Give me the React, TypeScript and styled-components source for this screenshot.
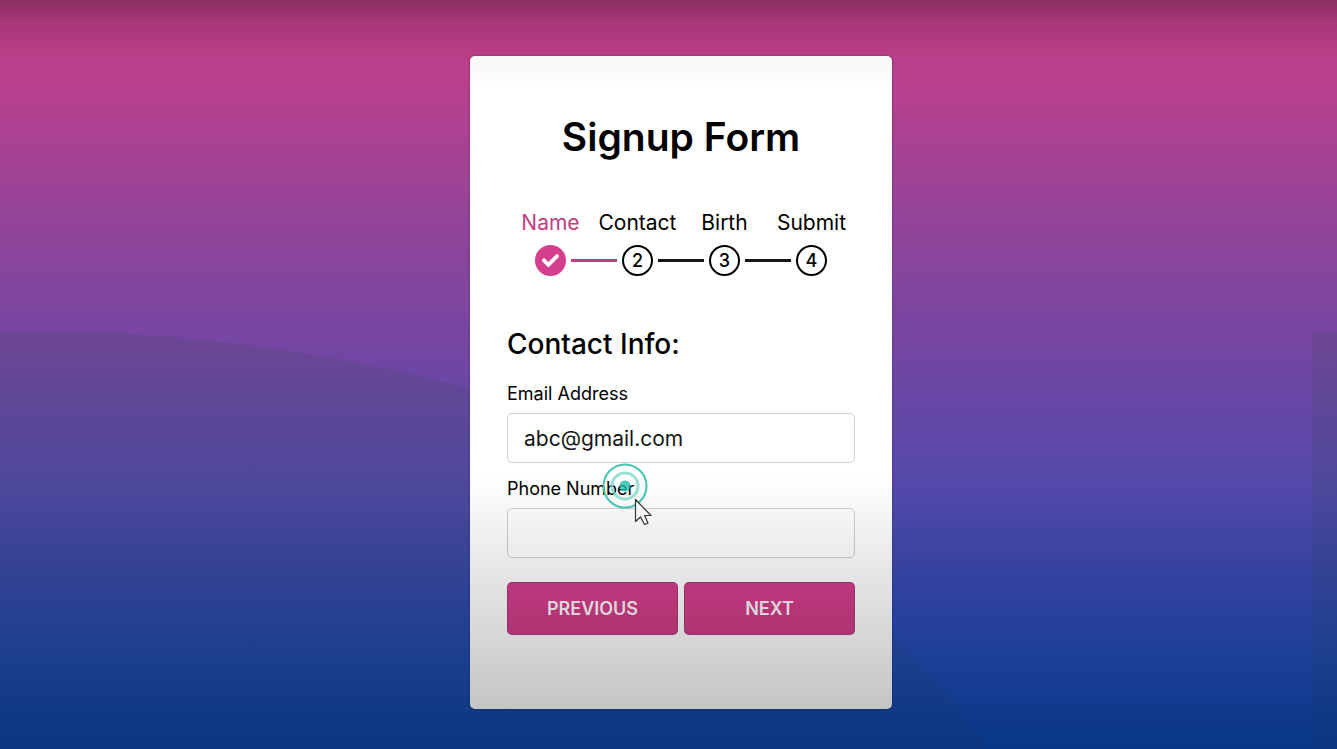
import React, { useState } from "react";
import styled, { createGlobalStyle } from "styled-components";

const GlobalStyle = createGlobalStyle`
  *, *::before, *::after { box-sizing: border-box; }
  body {
    margin: 0;
    font-family: Inter, "Open Sans", sans-serif;
    color: #000;
  }
`;

const Page = styled.div`
  position: relative;
  display: flex;
  justify-content: center;
  align-items: flex-start;
  min-height: 100vh;
  padding: 56px 0 40px 25px;
  overflow: hidden;
  background: linear-gradient(
    180deg,
    #8b2f63 0%,
    #a93679 3%,
    #bb3f8a 8%,
    #b6408f 13%,
    #934498 29%,
    #7646a2 45%,
    #5549aa 64%,
    #34429f 77%,
    #1c3f98 88%,
    #083785 100%
  );
`;

const Backdrop = styled.svg`
  position: absolute;
  inset: 0;
  width: 100%;
  height: 100%;
`;

const Card = styled.main`
  position: relative;
  width: 422px;
  max-width: 100%;
  padding: 51px 37px 74px;
  border-radius: 5px;
  background: linear-gradient(180deg, #f7f7f7 0%, #fff 5%, #fff 64%, #e3e3e3 81%, #c5c5c5 100%);
  box-shadow: 0 0 2px rgba(20, 20, 50, 0.6);
`;

const Title = styled.h1`
  margin: 0 0 42px;
  font-size: 39px;
  font-weight: 600;
  line-height: 60px;
  text-align: center;
  white-space: nowrap;
`;

const StepNames = styled.div`
  display: grid;
  grid-template-columns: repeat(4, 1fr);
  margin-bottom: 8px;
`;

const StepName = styled.span<{ $done?: boolean }>`
  font-size: 21px;
  font-weight: 400;
  line-height: 28px;
  text-align: center;
  white-space: nowrap;
  color: ${(p) => (p.$done ? "#c43d81" : "#000")};
`;

const StepTrack = styled.div`
  display: flex;
  align-items: center;
  gap: 5px;
  margin-bottom: 48px;
  padding: 0 28px;
`;

const Bullet = styled.span<{ $done?: boolean }>`
  display: flex;
  flex: none;
  align-items: center;
  justify-content: center;
  width: 31px;
  height: 31px;
  border: 2px solid ${(p) => (p.$done ? "#d43f8d" : "#000")};
  border-radius: 50%;
  background: ${(p) => (p.$done ? "#d43f8d" : "transparent")};
  font-size: 18px;
  font-weight: 500;
  line-height: 18px;
`;

const Connector = styled.span<{ $done?: boolean }>`
  flex: 1;
  height: 3px;
  background: ${(p) => (p.$done ? "#c43d81" : "#151515")};
`;

const SectionTitle = styled.h2`
  margin: 0 0 18px;
  font-size: 28px;
  font-weight: 500;
  line-height: 40px;
`;

const Field = styled.div`
  position: relative;
  display: flex;
  flex-direction: column;
  gap: 7px;
  margin-bottom: 14px;
`;

const Label = styled.label`
  font-size: 18px;
  font-weight: 400;
  line-height: 24px;
`;

const TextBox = styled.input`
  width: 100%;
  height: 50px;
  padding: 0 16px;
  border: 1px solid rgba(0, 0, 0, 0.18);
  border-radius: 5px;
  outline: none;
  background: transparent;
  color: #161616;
  font: 400 21px Inter, "Open Sans", sans-serif;
`;

const Actions = styled.div`
  display: flex;
  gap: 6px;
  margin-top: 24px;
`;

const ActionButton = styled.button`
  flex: 1;
  height: 53px;
  padding: 0;
  border: 1px solid rgba(80, 50, 90, 0.4);
  border-radius: 5px;
  background: linear-gradient(180deg, #be377c, #ae3473);
  color: #dfd5dc;
  font: 600 18px Inter, "Open Sans", sans-serif;
  text-transform: uppercase;
  cursor: pointer;
`;

const Pointer = styled.svg`
  position: absolute;
  top: -16px;
  left: 94px;
  pointer-events: none;
`;

const steps = ["Name", "Contact", "Birth", "Submit"];

export default function App() {
  const [email, setEmail] = useState("abc@gmail.com");
  const [phone, setPhone] = useState("");
  const completed = 1;

  return (
    <>
      <GlobalStyle />
      <Page>
        <Backdrop viewBox="0 0 1337 749" preserveAspectRatio="none" aria-hidden="true">
          <defs>
            <linearGradient id="shade" gradientUnits="userSpaceOnUse" x1="0" y1="331" x2="0" y2="749">
              <stop offset="0" stopColor="#30463a" stopOpacity="0.14" />
              <stop offset="0.600" stopColor="#20403f" stopOpacity="0.12" />
              <stop offset="1" stopColor="#10304a" stopOpacity="0.1" />
            </linearGradient>
          </defs>
          <path
            d="M0 331C170 328 330 352 470 388C670 438 830 560 897 640C940 682 965 715 985 749H0Z"
            fill="url(#shade)"
          />
          <path d="M1312 332H1337V749H1312Z" fill="url(#shade)" />
        </Backdrop>
        <Card>
          <Title>Signup Form</Title>
          <StepNames>
            {steps.map((name, i) => (
              <StepName key={name} $done={i < completed}>
                {name}
              </StepName>
            ))}
          </StepNames>
          <StepTrack>
            {steps.map((name, i) => (
              <React.Fragment key={name}>
                {i > 0 && <Connector $done={i <= completed} />}
                <Bullet $done={i < completed}>
                  {i < completed ? (
                    <svg width="17" height="17" viewBox="0 0 512 512" aria-label="Completed">
                      <path
                        fill="#fff"
                        stroke="#fff"
                        strokeWidth="20"
                        d="M173.9 439.4L7.5 273c-10-10-10-26.200 0-36.200l36.200-36.200c10-10 26.200-10 36.200 0L192 312.700 432.100 72.600c10-10 26.200-10 36.200 0l36.200 36.200c10 10 10 26.200 0 36.200L210.100 439.400c-10 10-26.200 10-36.200 0z"
                      />
                    </svg>
                  ) : (
                    i + 1
                  )}
                </Bullet>
              </React.Fragment>
            ))}
          </StepTrack>
          <form onSubmit={(e) => e.preventDefault()}>
            <SectionTitle>Contact Info:</SectionTitle>
            <Field>
              <Label htmlFor="email">Email Address</Label>
              <TextBox id="email" type="text" value={email} onChange={(e) => setEmail(e.target.value)} />
            </Field>
            <Field>
              <Label htmlFor="phone">Phone Number</Label>
              <TextBox id="phone" type="tel" value={phone} onChange={(e) => setPhone(e.target.value)} />
              <Pointer width="56" height="68" viewBox="0 0 56 68" aria-hidden="true">
                <circle cx="24" cy="25" r="21.500" fill="none" stroke="#45c4b4" strokeWidth="2" />
                <circle cx="24" cy="25" r="13" fill="none" stroke="#7fd8cc" strokeWidth="3" strokeOpacity="0.8" />
                <circle cx="24" cy="25" r="5.500" fill="#1fbfa9" fillOpacity="0.8" />
                <path
                  d="M34.500 38.500V60.500L39.500 56L43.500 63.500L47 62L43.500 54.500H50Z"
                  fill="#f6f6f6"
                  stroke="#333"
                  strokeWidth="1.200"
                  strokeLinejoin="round"
                />
              </Pointer>
            </Field>
            <Actions>
              <ActionButton type="button">Previous</ActionButton>
              <ActionButton type="submit">Next</ActionButton>
            </Actions>
          </form>
        </Card>
      </Page>
    </>
  );
}
